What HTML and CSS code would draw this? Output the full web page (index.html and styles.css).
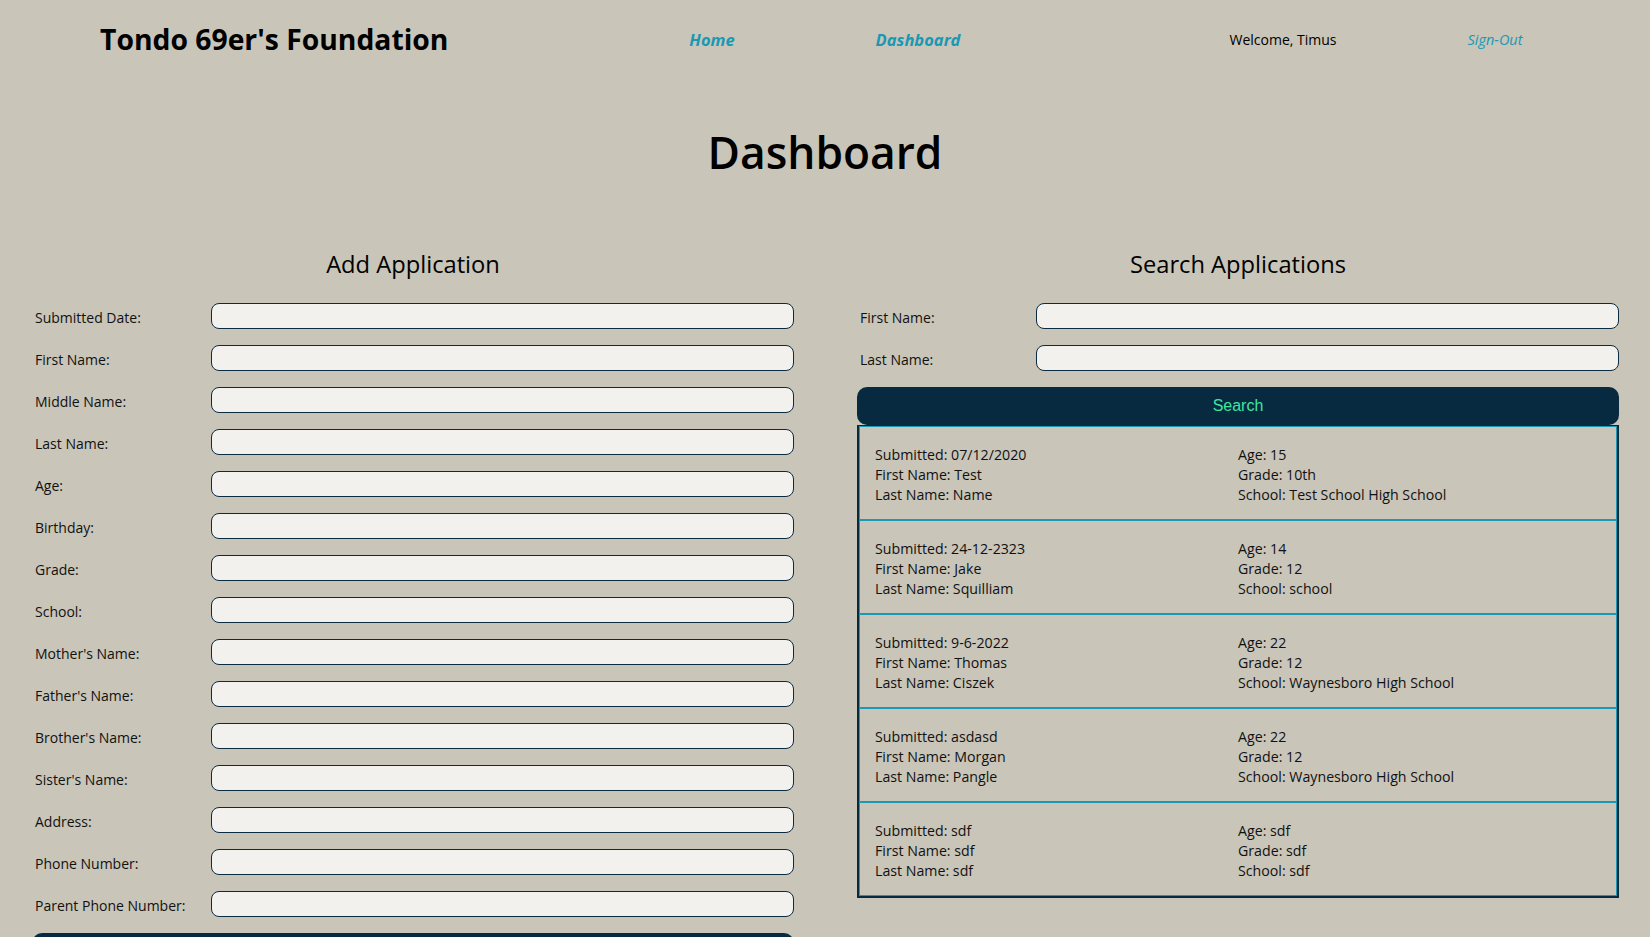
FILE: index.html
```html
<!DOCTYPE html>
<html lang="en">
<head>
<meta charset="utf-8">
<title>Tondo 69er's Foundation - Dashboard</title>
<link rel="stylesheet" href="styles.css">
</head>
<body>
<header class="topbar">
  <div class="brand">Tondo 69er's Foundation</div>
  <a class="nav-link nav-home" href="#">Home</a>
  <a class="nav-link nav-dash" href="#">Dashboard</a>
  <div class="welcome">Welcome, Timus</div>
  <a class="signout" href="#">Sign-Out</a>
</header>

<h1 class="page-title">Dashboard</h1>

<main class="columns">
  <section class="col">
    <h2 class="col-title">Add Application</h2>
    <form class="form">
      <div class="row"><label>Submitted Date:</label><input type="text"></div>
      <div class="row"><label>First Name:</label><input type="text"></div>
      <div class="row"><label>Middle Name:</label><input type="text"></div>
      <div class="row"><label>Last Name:</label><input type="text"></div>
      <div class="row"><label>Age:</label><input type="text"></div>
      <div class="row"><label>Birthday:</label><input type="text"></div>
      <div class="row"><label>Grade:</label><input type="text"></div>
      <div class="row"><label>School:</label><input type="text"></div>
      <div class="row"><label>Mother's Name:</label><input type="text"></div>
      <div class="row"><label>Father's Name:</label><input type="text"></div>
      <div class="row"><label>Brother's Name:</label><input type="text"></div>
      <div class="row"><label>Sister's Name:</label><input type="text"></div>
      <div class="row"><label>Address:</label><input type="text"></div>
      <div class="row"><label>Phone Number:</label><input type="text"></div>
      <div class="row"><label>Parent Phone Number:</label><input type="text"></div>
      <button type="button" class="btn">Submit</button>
    </form>
  </section>

  <section class="col">
    <h2 class="col-title">Search Applications</h2>
    <form class="form">
      <div class="row"><label>First Name:</label><input type="text"></div>
      <div class="row"><label>Last Name:</label><input type="text"></div>
      <button type="button" class="btn btn-search">Search</button>
    </form>
    <div class="results">
      <div class="item">
        <div><div>Submitted: 07/12/2020</div><div>First Name: Test</div><div>Last Name: Name</div></div>
        <div><div>Age: 15</div><div>Grade: 10th</div><div>School: Test School High School</div></div>
      </div>
      <div class="item">
        <div><div>Submitted: 24-12-2323</div><div>First Name: Jake</div><div>Last Name: Squilliam</div></div>
        <div><div>Age: 14</div><div>Grade: 12</div><div>School: school</div></div>
      </div>
      <div class="item">
        <div><div>Submitted: 9-6-2022</div><div>First Name: Thomas</div><div>Last Name: Ciszek</div></div>
        <div><div>Age: 22</div><div>Grade: 12</div><div>School: Waynesboro High School</div></div>
      </div>
      <div class="item">
        <div><div>Submitted: asdasd</div><div>First Name: Morgan</div><div>Last Name: Pangle</div></div>
        <div><div>Age: 22</div><div>Grade: 12</div><div>School: Waynesboro High School</div></div>
      </div>
      <div class="item">
        <div><div>Submitted: sdf</div><div>First Name: sdf</div><div>Last Name: sdf</div></div>
        <div><div>Age: sdf</div><div>Grade: sdf</div><div>School: sdf</div></div>
      </div>
    </div>
  </section>
</main>
</body>
</html>
```
FILE: styles.css
```css
* { box-sizing: border-box; }

html, body {
  margin: 0;
  padding: 0;
}

body {
  background: #c9c5b9;
  color: #111;
  font-family: "Open Sans", "Noto Sans", sans-serif;
}

.topbar {
  display: flex;
  align-items: center;
  height: 78px;
  padding-left: 100px;
}

.brand {
  width: 348px;
  font-weight: 700;
  font-size: 28.3px;
  color: #000;
  white-space: nowrap;
}

.nav-link {
  width: 120px;
  text-align: center;
  color: #1a98b4;
  font-weight: 700;
  font-style: italic;
  font-size: 16.5px;
  text-decoration: none;
}

.nav-home { margin-left: 204px; }
.nav-dash { margin-left: 86px; }

.welcome {
  width: 160px;
  margin-left: 225px;
  text-align: center;
  font-size: 14px;
  color: #000;
}

.signout {
  width: 120px;
  margin-left: 72px;
  text-align: center;
  font-size: 14.5px;
  font-style: italic;
  color: #1a98b4;
  text-decoration: none;
}

.page-title {
  margin: 48px 0 0;
  text-align: center;
  font-size: 44.3px;
  font-weight: 600;
  line-height: 53px;
  color: #000;
}

.columns {
  display: grid;
  grid-template-columns: 1fr 1fr;
  margin-top: 69px;
}

.col {
  padding: 0 31px 0 32px;
}

.col-title {
  margin: 0 0 23px;
  text-align: center;
  font-size: 23.7px;
  font-weight: 400;
  line-height: 32px;
  color: #000;
}

.form {
  margin: 0;
}

.row {
  display: grid;
  grid-template-columns: 179px 1fr;
  align-items: center;
  margin-bottom: 16px;
}

.row label {
  padding: 2px 0 0 3px;
  font-size: 14px;
  color: #111;
}

.row input {
  height: 26px;
  border: 1px solid #0b2b40;
  border-radius: 8px;
  background: #f2f1ee;
  font: inherit;
  padding: 0 8px;
}

.btn {
  display: block;
  width: 100%;
  height: 38px;
  border: none;
  border-radius: 10px;
  background: #082a40;
  color: #3ee6a0;
  font-family: "Liberation Sans", Arial, sans-serif;
  font-size: 16px;
  cursor: pointer;
}

.results {
  border: 2px solid #082a40;
  border-top-width: 1px;
}

.item {
  display: grid;
  grid-template-columns: 1fr 1fr;
  padding: 17.5px 15px 14.5px;
  border: 1px solid #1a98b4;
  font-size: 14.2px;
  line-height: 20px;
  color: #111;
}
```
